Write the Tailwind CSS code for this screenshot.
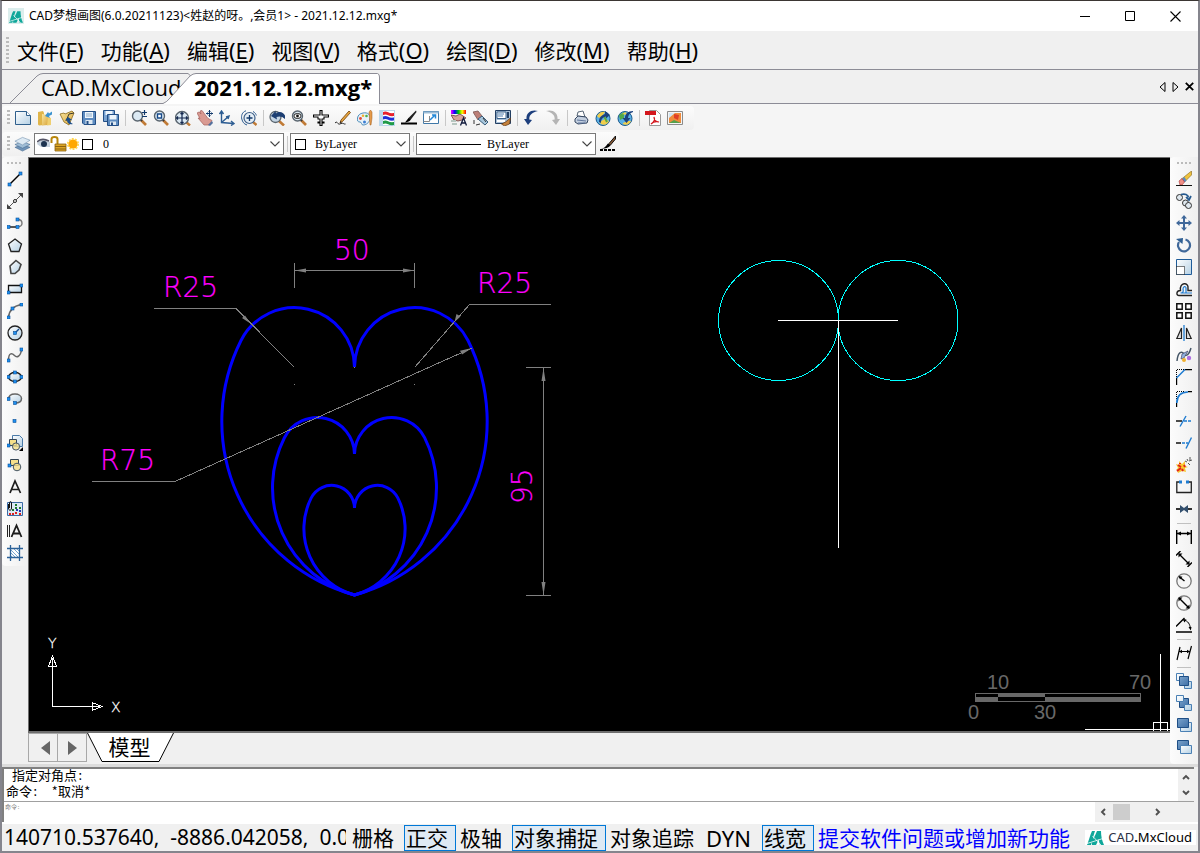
<!DOCTYPE html>
<html lang="zh-CN">
<head>
<meta charset="utf-8">
<title>CAD梦想画图</title>
<script src="https://cdn.jsdelivr.net/npm/@tailwindcss/browser@4"></script>
</head>
<body class="bg-[#f0f0f0] text-black">
<svg width="0" height="0" class="absolute" aria-hidden="true">
  <defs>
    <linearGradient id="gl" x1="0" y1="0" x2="1" y2="1"><stop offset="0" stop-color="#fff"/><stop offset="1" stop-color="#b4d0e4"/></linearGradient>
    <linearGradient id="gf" x1="0" y1="0" x2="1" y2="1"><stop offset="0" stop-color="#f9e6a0"/><stop offset="1" stop-color="#d9a53a"/></linearGradient>
    <linearGradient id="gd" x1="0" y1="0" x2="1" y2="1"><stop offset="0" stop-color="#7aa3cc"/><stop offset="1" stop-color="#3d6ea5"/></linearGradient>
    <linearGradient id="gr" x1="0" y1="0" x2="1" y2="0"><stop offset="0" stop-color="#f0f"/><stop offset=".25" stop-color="#00f"/><stop offset=".5" stop-color="#0c0"/><stop offset=".75" stop-color="#ff0"/><stop offset="1" stop-color="#f00"/></linearGradient>
    <g id="mag"><path d="M10 10l5 5" stroke="#c07a35" stroke-width="2.6"/><path d="M9.500 9.500l1.500 1.500" stroke="#333" stroke-width="2"/><circle cx="6.500" cy="6" r="5" fill="#dbe9f3" stroke="#59646e" stroke-width="1.400"/></g>
    <g id="magb"><path d="M11 12l4 3.500" stroke="#c07a35" stroke-width="2.400"/><circle cx="7" cy="8" r="6.500" fill="#dbe9f3" stroke="#59646e" stroke-width="1.400"/></g>
    <g id="pt"><rect x="-1.500" y="-1.500" width="3" height="3" fill="#1e90f0" stroke="#0a4f96" stroke-width=".6"/></g>
  </defs>
  <symbol id="new" viewBox="0 0 16 16"><path d="M.5 1.500h11l4 4v9h-15z" fill="url(#gl)" stroke="#2f5f8c"/><path d="M11.500 1.500v4h4" fill="#fff" stroke="#2f5f8c"/></symbol>
  <symbol id="open" viewBox="0 0 16 16"><path d="M1 2l5-1 1 2v12l-5 .5-1-1z" fill="#e0b54a"/><path d="M5 4l6 1v10l-6 .5z" fill="url(#gf)"/><path d="M11 7l3 1v7l-4 .5z" fill="#efcf70"/><path d="M8 6l3-4 1 1.500 3-2v3l-3 1.500 1 2z" fill="#3c93cf"/></symbol>
  <symbol id="openc" viewBox="0 0 16 16"><path d="M1 4l4-1 1 1 7-3 2 2-5 12-5-3z" fill="url(#gf)" stroke="#8a6a1c" stroke-width=".8"/><path d="M7 11l3-7 5-1" fill="none" stroke="#3b3b2c"/><path d="M14 14c-4 1-6-1-6-4l-2 .5L9 7l4 3-2 .3c0 2 1 3 3 3.700z" fill="#1d4f8b"/></symbol>
  <symbol id="save" viewBox="0 0 16 16"><path d="M1.500 1.500h13v13H3l-1.500-1.500z" fill="#5d8bc0" stroke="#234f86"/><path d="M4 2h8v6H4z" fill="#eef5fb"/><path d="M5 4h6M5 6h6" stroke="#89aac9"/><path d="M4.500 10h7v4h-7z" fill="#dde8f2"/><path d="M5.500 11h2v3h-2z" fill="#234f86"/></symbol>
  <symbol id="saveall" viewBox="0 0 16 16"><path d="M.5.500h11v11H.5z" fill="#7ba4d2" stroke="#234f86"/><path d="M2.500 1h7v4h-7z" fill="#eef5fb"/><path d="M4.500 4.500h11v11h-11z" fill="#5d8bc0" stroke="#234f86"/><path d="M6.500 5h7v4.500h-7z" fill="#eef5fb"/><path d="M7 11.500h6V15H7z" fill="#dde8f2"/><path d="M8 12.500h2V15H8z" fill="#234f86"/></symbol>
  <symbol id="zoompm" viewBox="0 0 16 16"><use href="#mag"/><path d="M13.500 0v5M11 2.500h5M11 6.500h5" stroke="#12396b" fill="none" stroke-width="1.200"/></symbol>
  <symbol id="zoomw" viewBox="0 0 16 16"><use href="#mag"/><path d="M4.500 4h4v4h-4z" fill="#fff" stroke="#174a8a" stroke-width="1.400"/></symbol>
  <symbol id="zoome" viewBox="0 0 16 16"><use href="#magb"/><path d="M7 2.500v11M1.500 8h11M5.500 4L7 2.500 8.500 4M5.500 12L7 13.500 8.500 12M3 6.500L1.500 8 3 9.500M11 6.500L12.500 8 11 9.500" stroke="#12264d" fill="none" stroke-width="1.200"/></symbol>
  <symbol id="pan" viewBox="0 0 16 16"><path d="M0 3l2-1 2 2-1-3 2-.5 3 4 3 4 4 2-3 4.500H7L1 8l2 .5z" fill="#d99a92" stroke="#a35f5a" stroke-width=".7"/><path d="M11 15l4-4 1 2-3 3z" fill="#54719e"/><path d="M12.500 0v7M9 3.500h7M11.500 1.500h2M11.500 5.500h2M10.500 2.500v2M14.500 2.500v2" stroke="#12396b" fill="none"/></symbol>
  <symbol id="ucs" viewBox="0 0 16 16"><path d="M2.500 1v11.500l12 1M2.500 12.500l7-6M.5 4l2-3 2 3M12 11l3 2.500-3 2M7 7l3-1-1 3" fill="none" stroke="#2c5c92" stroke-width="1.400"/></symbol>
  <symbol id="zoomr" viewBox="0 0 16 16"><path d="M12 12l3.500 3" stroke="#c07a35" stroke-width="2.400"/><circle cx="8.500" cy="8" r="5.500" fill="#e4eef6" stroke="#3d5f88" stroke-width="1.200"/><path d="M8.500 5v6M5.500 8h6" stroke="#12396b" stroke-width="1.300"/><path d="M5 .8C1 2 0 6 .8 9s2 5 5.200 6M12 1.500c2 1 3 2.500 3.300 4" fill="none" stroke="#2c5c92"/></symbol>
  <symbol id="zoomp" viewBox="0 0 16 16"><path d="M10 11l5 4.500" stroke="#c07a35" stroke-width="2.600"/><circle cx="6.500" cy="7" r="5.500" fill="#c4d5e4" stroke="#59646e" stroke-width="1.300"/><path d="M2 6l4.500-5 .5 2.500c4-3 7-1 9 2V9C13 6 10 6 7.500 7L8 9.500z" fill="#1d3f73"/></symbol>
  <symbol id="zoomv" viewBox="0 0 16 16"><use href="#mag"/><ellipse cx="6.500" cy="6" rx="3.600" ry="2.500" fill="#fff" stroke="#222"/><circle cx="6.500" cy="6" r="1.400" fill="#111"/></symbol>
  <symbol id="plane" viewBox="0 0 16 16"><path d="M7 .5h2V5h6.500v2H11v2H9v3h2v1H9v2.500H7V13H5v-1h2V9H5V7H.5V5H7z" fill="#fff" stroke="#000" stroke-width="1.100"/></symbol>
  <symbol id="pencil" viewBox="0 0 16 16"><path d="M14 1l1.500 1.500-8 9L5 13l1-3z" fill="#e8a73c" stroke="#7c4a16" stroke-width=".9"/><path d="M5 13l.6-2 1.200 1.200z" fill="#222"/><path d="M0 13c3-3 2 3 6 .5 2-1 3 1 4.500.5" fill="none" stroke="#222"/></symbol>
  <symbol id="palette" viewBox="0 0 16 16"><path d="M6 3c5-1 8 2 7 6-1 4-4 6-7 6-2 0-1-3-3-3s-3-1-2.500-4C1 5 3 3.500 6 3z" fill="#e8f1f8" stroke="#4f8fbc"/><circle cx="3.500" cy="8.500" r="1.400" fill="#e04b3a"/><circle cx="6" cy="5.700" r="1.300" fill="#f0b030"/><circle cx="9.500" cy="6" r="1.300" fill="#4bb04b"/><circle cx="7.500" cy="12" r="1.500" fill="#3b7fd4"/><path d="M12 2l1.500-2L15 2v6l-1 7h-1z" fill="#e59a4a" stroke="#9e5c1e" stroke-width=".5"/></symbol>
  <symbol id="ltype" viewBox="0 0 16 16"><path d="M0 0h16v16H0z" fill="#bcd8ec"/><path d="M4 1h11v14H4z" fill="#fff"/><path d="M4 2c4-2 5 2 11 1v3c-6 1-7-3-11-1z" fill="#e8202c"/><path d="M4 6.500c4-2 5 2 11 1v3c-6 1-7-3-11-1z" fill="#1f2fd8"/><path d="M4 11c4-2 5 2 11 1v3c-6 1-7-3-11-1z" fill="#1f9a48"/></symbol>
  <symbol id="lweight" viewBox="0 0 16 16"><path d="M15 .5l.5 1.500L9.500 10l-2.500.5.500-2.500z" fill="#222"/><path d="M7.500 8l2 2C8 12 6 12 4 12.500z" fill="#000"/><path d="M0 13.500h16" stroke="#000" stroke-width="2"/></symbol>
  <symbol id="scalewin" viewBox="0 0 16 16"><path d="M.5 1.500h15v12H.5z" fill="#fff" stroke="#3f78a8"/><path d="M.5 2.500h15" stroke="#9dbdd7" stroke-width="2"/><path d="M6.500 6v5.500H.5" fill="none" stroke="#888"/><path d="M7 10l5-5M9 5h3.500v3.500" fill="none" stroke="#2589d8" stroke-width="1.500"/></symbol>
  <symbol id="colorA" viewBox="0 0 16 16"><path d="M0 0h15v4H0z" fill="url(#gr)"/><path d="M0 5l5 1 4-2 6 4-4 2-4 1-4-1z" fill="#d7a198" stroke="#6b3b39" stroke-width=".8"/><path d="M0 10h5v2H0zM1 13h5v2H1z" fill="#b7c6c0"/><path d="M9.500 15.500L12.500 8l3 7.500M10.500 13h4" fill="none" stroke="#101a3c" stroke-width="1.300"/></symbol>
  <symbol id="brush" viewBox="0 0 16 16"><path d="M0 2l5-1 4 5-4 4z" fill="#bd8078" stroke="#7a5652" stroke-width=".8"/><path d="M5 9l4-3 6 6-3 3z" fill="#a7c6dc" stroke="#395d7b"/><path d="M1 10v4M3 15l4-1M10 8l3 4" stroke="#333"/></symbol>
  <symbol id="blockw" viewBox="0 0 16 16"><path d="M.5.500h15v13H.5z" fill="#a9bfd6" stroke="#223f63"/><path d="M2 2h9v6.500H2z" fill="#fff" stroke="#3b628c"/><path d="M3 4h6M3 6h5" stroke="#4f7fb0"/><path d="M12 2h2v6h-2z" fill="#223f63"/><path d="M2 10h8v2H2z" fill="#fff"/><path d="M15.500 8l-5 4-4 2 3 2 5-2z" fill="#c4803a" stroke="#5c3411" stroke-width=".7"/></symbol>
  <symbol id="undo" viewBox="0 0 16 16"><path d="M15 1C8-1 3 3 3.500 9L1 9l4 6 4-5-2.700-.5C6 5 9 2.500 15 1z" fill="#1d3f7d"/></symbol>
  <symbol id="redo" viewBox="0 0 16 16"><path d="M1 1c7-2 12 2 11.500 8H15l-4 6-4-5 2.700-.5C10 5 7 2.500 1 1z" fill="#b4b4b4"/></symbol>
  <symbol id="print" viewBox="0 0 16 16"><path d="M4 6l1-4 5-1 2 6z" fill="#fff" stroke="#456" stroke-width=".9"/><path d="M2 9l3-3 8 1 2 3-1 3-9 1-3-2z" fill="#c3cfdf" stroke="#33455f"/><path d="M4 10l9 1M5 13l7 0" stroke="#5e749a"/></symbol>
  <symbol id="web1" viewBox="0 0 16 16"><circle cx="8" cy="8.500" r="7" fill="#59b0e6" stroke="#1c5a8b"/><path d="M2 6c2-4 6-5 8-4L8 5l-4 3zM4 12l6-3 4 2c-1 3-5 5-8 3z" fill="#f1cd4a"/><path d="M9 6l3 6" stroke="#5aa844" stroke-width="2"/><path d="M4 12c0-5 3-7 6-8l0-3 5 4-4 3.500V6.500C8 7 6 9 6 13z" fill="#1c417e"/></symbol>
  <symbol id="web2" viewBox="0 0 16 16"><circle cx="8" cy="8.500" r="7" fill="#59b0e6" stroke="#1c5a8b"/><path d="M2 5l5-3v6l-4 2z" fill="#51a748"/><path d="M6 13l5-2 3 0c-1 3-5 5-8 3zM5 4l4-2 1 3z" fill="#f1cd4a"/><path d="M16 1c-5 0-8 3-8 7H5.500l4 5 4-5H11c0-3 2-5 5-6z" fill="#1c417e"/></symbol>
  <symbol id="pdf" viewBox="0 0 16 16"><path d="M4.500.500h7l4 4v11h-11z" fill="#fff" stroke="#999"/><path d="M0 1h11v4H0z" fill="#d3161d"/><path d="M6 14c3-2 4-5 3-7 0 4 2 5 5 5-3-1-6 0-8 2z" fill="none" stroke="#d3161d" stroke-width="1.200"/></symbol>
  <symbol id="img" viewBox="0 0 16 16"><path d="M.5 1.500h15v13H.5z" fill="#f4f4f4" stroke="#8b8b8b"/><path d="M2 3h12v10H2z" fill="#f08a3a"/><path d="M2 3h6l-6 5z" fill="#cfe6f5"/><path d="M2 13l5-3 7 3z" fill="#56a04a"/><path d="M7 4l5 1-1 5-4-2z" fill="#df3f27"/></symbol>
  <symbol id="layers" viewBox="0 0 18 16"><path d="M1 11.500l8-3 8 3-8 4z" fill="#6f93b8" stroke="#44688e" stroke-width=".6"/><path d="M1 8.500l8-3 8 3-8 4z" fill="#9fbdd6" stroke="#44688e" stroke-width=".6"/><path d="M1 5l8-4 8 3-8 5z" fill="#dce9f3" stroke="#6f8fae" stroke-width=".6"/></symbol>
  <symbol id="lwpen" viewBox="0 0 16 16"><path d="M15.500 0v3l-5 6-2 .5.500-2z" fill="#8a5a35" stroke="#111"/><path d="M1 12.500c4 0 5-3 7-5l2.500 2c-2 2.500-5 3-9.500 3z" fill="#000"/><path d="M0 14h16" stroke="#000" stroke-width="2" stroke-dasharray="3 1"/></symbol>
  <!-- draw toolbar -->
  <symbol id="line" viewBox="0 0 16 16"><path d="M2.500 13.500l11-11" stroke="#000" stroke-width="1.400"/><use href="#pt" x="2.500" y="13.500"/><use href="#pt" x="13.500" y="2.500"/></symbol>
  <symbol id="xline" viewBox="0 0 16 16"><path d="M2 14L14 2" stroke="#555"/><path d="M0 16v-5l5 5zM16 0v5l-5-5z" fill="#444"/><circle cx="8" cy="8" r="1.500" fill="#fff" stroke="#222"/></symbol>
  <symbol id="pline" viewBox="0 0 16 16"><path d="M1.500 12h9" stroke="#111" stroke-width="1.400"/><path d="M10.500 12c6 0 6-7.500 0-7.500" fill="none" stroke="#777" stroke-width="1.400"/><use href="#pt" x="1.500" y="12"/><use href="#pt" x="10.500" y="12"/><use href="#pt" x="10.500" y="4.500"/></symbol>
  <symbol id="polygon" viewBox="0 0 16 16"><path d="M8 2l6.500 5-2.500 7.500H4L1.500 7z" fill="url(#gl)" stroke="#222" stroke-width="1.300"/></symbol>
  <symbol id="polyirr" viewBox="0 0 16 16"><path d="M9 1.500l5 4-2 5.500-4 3.500H4L3 7z" fill="url(#gl)" stroke="#444" stroke-width="1.600"/></symbol>
  <symbol id="rect" viewBox="0 0 16 16"><path d="M1.500 4.500h13v7h-13z" fill="url(#gl)" stroke="#111" stroke-width="1.300"/><use href="#pt" x="1.500" y="11.500"/><use href="#pt" x="14.500" y="4.500"/></symbol>
  <symbol id="arc" viewBox="0 0 16 16"><path d="M1.500 14.500C2 7 6 3 14.500 1.500" fill="none" stroke="#666" stroke-width="1.500"/><use href="#pt" x="1.500" y="14.500"/><use href="#pt" x="5.500" y="5.500"/><use href="#pt" x="14.500" y="1.500"/></symbol>
  <symbol id="circle" viewBox="0 0 16 16"><circle cx="8" cy="8" r="7" fill="url(#gl)" stroke="#222" stroke-width="1.300"/><path d="M8 8l4-4" stroke="#174a8a" stroke-width="1.400"/><use href="#pt" x="8" y="8"/></symbol>
  <symbol id="spline" viewBox="0 0 16 16"><path d="M1.500 13.500c0-9 4-7 6-5s6 2 7-6" fill="none" stroke="#666" stroke-width="1.500"/><use href="#pt" x="1.500" y="13.500"/><use href="#pt" x="14.500" y="2.500"/></symbol>
  <symbol id="ellipse" viewBox="0 0 16 16"><ellipse cx="8" cy="8" rx="6.500" ry="4.500" fill="url(#gl)" stroke="#222" stroke-width="1.400"/><use href="#pt" x="1.500" y="8"/><use href="#pt" x="14.500" y="8"/><use href="#pt" x="8" y="3.500"/><use href="#pt" x="8" y="12.500"/></symbol>
  <symbol id="earc" viewBox="0 0 16 16"><path d="M1.500 8C2 1 14.500 2 14.500 7.500c0 3-3 4.500-6.500 4.500" fill="url(#gl)" stroke="#666" stroke-width="1.500"/><use href="#pt" x="1.500" y="8"/><use href="#pt" x="8" y="12"/></symbol>
  <symbol id="point" viewBox="0 0 16 16"><use href="#pt" x="7.500" y="8"/></symbol>
  <symbol id="block" viewBox="0 0 16 16"><path d="M5.500.500h7l3 3v8h-10z" fill="url(#gl)" stroke="#4a7aa8"/><path d="M2.500 4.500h7v6h-7z" fill="#f6e08a" stroke="#345"/><circle cx="9" cy="11.500" r="3.600" fill="#f6e08a" fill-opacity=".8" stroke="#456"/><use href="#pt" x="1.500" y="10.500"/><path d="M16 12v4h-4z" fill="#000"/></symbol>
  <symbol id="insert" viewBox="0 0 16 16"><path d="M3.500 2.500h8v6h-8z" fill="#f6e08a" stroke="#345"/><circle cx="10" cy="10" r="3.800" fill="#f6e08a" fill-opacity=".8" stroke="#456"/><use href="#pt" x="2.500" y="8.500"/></symbol>
  <symbol id="text" viewBox="0 0 16 16"><path d="M3 14L8 2l5.500 12M4.500 10.500h7" fill="none" stroke="#1c1c1c" stroke-width="1.700"/></symbol>
  <symbol id="hatch" viewBox="0 0 16 16"><path d="M.5 1.500h15v13H.5z" fill="#dce9f5" stroke="#3b6ba5"/><path d="M5 8h2v2H5zM8 3h2v2H8zM8 6h2v2H8zM12 6h2v2h-2z" fill="#1a7a2e"/><path d="M2 12h2v2H2zM5 12h2v2H5zM8 11h2v2H8zM12 12h2v2h-2z" fill="#e02020"/><path d="M12 9h2v2h-2zM9 8h2v2H9z" fill="#2438b0"/><path d="M1.500 3v4c0 3 3 3 3 0V2c0-2-2-2-2 0v5" fill="none" stroke="#111"/></symbol>
  <symbol id="mtext" viewBox="0 0 16 16"><path d="M.5 2v12M2.500 2v12" stroke="#222"/><path d="M4.500 14L9.500 2.500 14.500 14M6 10.500h7" fill="none" stroke="#1c1c1c" stroke-width="1.800"/></symbol>
  <symbol id="region" viewBox="0 0 16 16"><path d="M3 3.500h10v9H3z" fill="#fff"/><path d="M3 10l3 3M3 7l6 6M3 4l9 9M6 3l7 7M9 3l4 4" stroke="#7aa6cf"/><path d="M0 3.500h16M0 12.500h16M3.500 0v16M12.500 0v16" stroke="#2c6299" stroke-width="1.300"/></symbol>
  <!-- modify toolbar -->
  <symbol id="erase" viewBox="0 0 16 16"><path d="M15.500 0v4l-7 7-3-3z" fill="#f0c33c" stroke="#8a6414" stroke-width=".6"/><path d="M8.500 6l2 3.500-2 2-3-3.500z" fill="#5b8abf"/><path d="M3 10l3-2.500 2.500 3.500L6 14H4z" fill="#ef8f87" stroke="#a33" stroke-width=".6"/><path d="M0 14.500h16" stroke="#111"/></symbol>
  <symbol id="copy" viewBox="0 0 16 16"><circle cx="3.500" cy="4.500" r="3" fill="#dfe8ef" stroke="#333"/><circle cx="9.500" cy="10" r="3" fill="#dfe8ef" stroke="#333"/><circle cx="12.500" cy="12.500" r="3" fill="#dfe8ef" stroke="#333"/><path d="M5 1.500c4-1 7 0 7.500 3M10 4l3 3 2-4" fill="none" stroke="#24598f" stroke-width="1.700"/></symbol>
  <symbol id="move" viewBox="0 0 16 16"><path d="M8 0l3 3.500H9V7h3.500V5L16 8l-3.500 3V9H9v3.500h2L8 16l-3-3.500h2V9H3.500v2L0 8l3.500-3v2H7V3.500H5z" fill="#40689a"/></symbol>
  <symbol id="rotate" viewBox="0 0 16 16"><path d="M9.500 2.500A6 6 0 1 1 3 5" fill="none" stroke="#40689a" stroke-width="2.200"/><path d="M0 2l7-1-.5 6z" fill="#2f5f93"/></symbol>
  <symbol id="scale" viewBox="0 0 16 16"><path d="M.5.500h15v15H.5z" fill="url(#gl)" stroke="#1f5c99"/><path d="M.5 7.500h8v8h-8z" fill="#fff" stroke="#000" stroke-dasharray="1 1"/></symbol>
  <symbol id="offset" viewBox="0 0 16 16"><path d="M16 14.500H3c-3 0-3-5 1.500-5C3 1 13 1 12 7v2.500h4" fill="none" stroke="#222" stroke-width="1.400"/><path d="M16 12H4.500c3 0 3-2 2.500-4 0-3 3-3 3-1v5" fill="none" stroke="#1e7bd0" stroke-width="1.200"/></symbol>
  <symbol id="array" viewBox="0 0 16 16"><path d="M.8.800h5.400v5.400H.8zM9.800.800h5.400v5.400H9.800zM.8 9.800h5.400v5.400H.8zM9.800 9.800h5.400v5.400H9.800z" fill="#fff" stroke="#111" stroke-width="1.500"/></symbol>
  <symbol id="mirror" viewBox="0 0 16 16"><path d="M5.500 3v10.500H.8zM10.500 3v10.500h4.700z" fill="#e4e4e4" stroke="#222" stroke-width="1.200"/><path d="M8 0v16" stroke="#1e7bd0" stroke-width="1.300"/></symbol>
  <symbol id="match" viewBox="0 0 16 16"><path d="M1 14C2 4 6 4 8 7s5 1 7-6" fill="none" stroke="#456" stroke-width="1.400"/><path d="M6 7l6-3-4 7-3 1z" fill="#8fb0dc" stroke="#335" stroke-width=".6"/><circle cx="8" cy="13" r="2" fill="#f0b030"/><circle cx="13" cy="11" r="2.200" fill="#b06fe0"/></symbol>
  <symbol id="chamfer" viewBox="0 0 16 16"><path d="M.5 8V.5H8" fill="none" stroke="#000" stroke-dasharray="1 1"/><path d="M.5 16V9M9 .5h7" stroke="#000" stroke-width="1.400"/><path d="M.5 9L9 .5" stroke="#1e7bd0" stroke-width="1.500"/></symbol>
  <symbol id="fillet" viewBox="0 0 16 16"><path d="M.5 8V.5H8" fill="none" stroke="#000" stroke-dasharray="1 1"/><path d="M.5 16v-4M12 .5h4" stroke="#000" stroke-width="1.400"/><path d="M.8 12C1 5 5 1 12 1" fill="none" stroke="#1e7bd0" stroke-width="1.700"/></symbol>
  <symbol id="trim" viewBox="0 0 16 16"><path d="M0 8h6" stroke="#000" stroke-width="1.400"/><path d="M8 8h8" stroke="#1e7bd0" stroke-width="1.400" stroke-dasharray="3 1"/><path d="M4 13.500L10 3" stroke="#1e7bd0" stroke-width="1.400"/></symbol>
  <symbol id="extend" viewBox="0 0 16 16"><path d="M0 8h5" stroke="#000" stroke-width="1.400"/><path d="M6 8h6" stroke="#1e7bd0" stroke-width="1.400" stroke-dasharray="3 1"/><path d="M10 13.500L15.500 2.500" stroke="#1e7bd0" stroke-width="1.400"/></symbol>
  <symbol id="explode" viewBox="0 0 16 16"><path d="M0 7l3 1V4l3 3 3-3 0 5 3 1-3 1 1 4-4-1-4 2-1-3-1 0 2-2z" fill="#f8c832"/><path d="M1 14l4-3M2 8l3 2M7 14l-1-2M8 8l1 2M4 6v1" stroke="#e2231a" stroke-width="2"/><path d="M9 4l2 1M11 2l1 2M14 0v3M13 4l3-1M12 6l2 2" stroke="#555"/></symbol>
  <symbol id="break" viewBox="0 0 16 16"><path d="M4 3H.8v10.500h14.500V3H12" fill="none" stroke="#222" stroke-width="1.300"/><path d="M3 1.500h3v3H3zM10 1.500h3v3h-3z" fill="#1e7bd0"/></symbol>
  <symbol id="join" viewBox="0 0 16 16"><path d="M0 8h16" stroke="#000" stroke-width="1.600"/><path d="M4 4l4 3 4-3v8L8 9l-4 3z" fill="#34506e"/></symbol>
  <symbol id="dlin" viewBox="0 0 16 16"><path d="M.7 1v14M15.300 1v14M1 4.500h14" stroke="#000" stroke-width="1.400"/><path d="M1 4.500l4-2v4zM15 4.500l-4-2v4z"/></symbol>
  <symbol id="dali" viewBox="0 0 16 16"><path d="M4.500 0L0 4.500M16 11.500L11.500 16M3 3l10 10" stroke="#000" stroke-width="1.400"/><path d="M2.500 2.500h4l-4 4zM13.500 13.500h-4l4-4z"/></symbol>
  <symbol id="drad" viewBox="0 0 16 16"><circle cx="8" cy="8" r="7.200" fill="#f6f6f6" stroke="#777" stroke-width="1.300"/><path d="M3.500 4l5 4" stroke="#000" stroke-width="1.500"/><path d="M2.500 3l4 .8-2.500 2.700z"/></symbol>
  <symbol id="ddia" viewBox="0 0 16 16"><circle cx="8" cy="8" r="7.200" fill="#f6f6f6" stroke="#777" stroke-width="1.300"/><path d="M3 3l10 10" stroke="#000" stroke-width="1.400"/><path d="M2.500 2.500h4l-4 4zM13.500 13.500h-4l4-4z"/></symbol>
  <symbol id="dang" viewBox="0 0 16 16"><path d="M0 15h16M0 9.500L8.500 1" stroke="#000" stroke-width="1.400"/><path d="M8 3c4 1 6 4 6.500 9" fill="none" stroke="#000"/><path d="M6.500 2l4 .5-2 3zM14.800 13.500L12.500 10h3z"/></symbol>
  <symbol id="dedit" viewBox="0 0 16 16"><path d="M4 2L1 15M15.500 1L12 14M3.500 6.500h10" stroke="#000" stroke-width="1.200"/><path d="M3 6.500l3-1.700v3.400zM14 6.500l-3-1.700v3.400z"/></symbol>
  <symbol id="o1" viewBox="0 0 16 16"><path d="M.5.500h7v7h-7zM8.500 8.500h7v7h-7z" fill="url(#gl)" stroke="#4a80b4"/><path d="M3.500 3.500h9v9h-9z" fill="url(#gd)" stroke="#1f4f86"/></symbol>
  <symbol id="o2" viewBox="0 0 16 16"><path d="M3.500 3.500h9v9h-9z" fill="url(#gd)" stroke="#1f4f86"/><path d="M.5.500h7v6h-7zM8.500 9.500h7v6h-7z" fill="url(#gl)" stroke="#4a80b4"/></symbol>
  <symbol id="o3" viewBox="0 0 16 16"><path d="M4.500 5.500h11v9h-11z" fill="url(#gl)" stroke="#4a80b4"/><path d="M1.500 1.500h11v9h-11z" fill="url(#gd)" stroke="#1f4f86"/></symbol>
  <symbol id="o4" viewBox="0 0 16 16"><path d="M1.500 1.500h11v9h-11z" fill="url(#gd)" stroke="#1f4f86"/><path d="M4.500 6.500h11v8h-11z" fill="url(#gl)" stroke="#4a80b4"/></symbol>
  <symbol id="logo" viewBox="0 0 17 14"><path d="M0 14C2 9 3 4 5 0h3c-1 3-2 6-2 8C8 5 9 2 10 0h4c0 5 1 10 3 14h-4c-1-2-1-4-1-6l-3 6H5l0-3-1 3z" fill="#0fa79a"/><path d="M0 12.500l16-5M5.500 5L14 14" stroke="#fff" stroke-width=".8"/></symbol>
  <symbol id="chev" viewBox="0 0 10 6"><path d="M.5.500L5 5 9.500.500" fill="none" stroke="#444" stroke-width="1.100"/></symbol>
  <symbol id="chevb" viewBox="0 0 8 6"><path d="M1 1l3 3 3-3" fill="none" stroke="#505050" stroke-width="1.900"/></symbol>
</svg>

<div class="flex min-h-screen w-full flex-col border-t border-r-2 border-b-2 border-l-2 border-t-[#3b3633] border-r-[#85858d] border-b-[#85858d] border-l-[#85858d] font-['Noto_Sans','Noto_Sans_CJK_SC',sans-serif]">
  <!-- title bar -->
  <header class="flex h-[30px] items-center bg-white pl-1.5">
    <div class="flex size-4 items-end justify-center bg-[#dceeed] p-px"><svg class="h-3 w-3.5"><use href="#logo"/></svg></div>
    <h1 class="ml-[5px] flex-1 text-[12px] leading-5 whitespace-pre">CAD梦想画图(6.0.20211123)&lt;姓赵的呀。,会员1&gt; - 2021.12.12.mxg*</h1>
    <button aria-label="最小化" class="flex h-full w-[45px] items-center justify-center"><svg width="10" height="10"><path d="M0 5.500h10" stroke="#000"/></svg></button>
    <button aria-label="最大化" class="flex h-full w-[46px] items-center justify-center"><svg width="10" height="10"><path d="M.5.500h9v9h-9z" fill="none" stroke="#000"/></svg></button>
    <button aria-label="关闭" class="flex h-full w-[45px] items-center justify-center"><svg width="11" height="11"><path d="M.5.500l10 10M10.500.500l-10 10" stroke="#000" stroke-width="1.100"/></svg></button>
  </header>
  <!-- menu -->
  <nav class="flex h-[39px] items-center border-b border-[#8c8c96] pl-1">
    <div class="mr-2 h-[26px] w-[3px] bg-[repeating-linear-gradient(#bbb_0_2px,transparent_2px_4px)]"></div>
    <div id="menus" class="flex gap-[17px] text-[21px] leading-7"></div>
  </nav>
  <!-- document tabs -->
  <div class="flex h-[34px] items-end border-b border-[#8c8c96] pl-2">
    <button class="relative h-[30px] w-[184px] overflow-hidden pb-0.5 pl-[31px] text-left text-[22px] leading-7 whitespace-nowrap font-['Open_Sans','Noto_Sans',sans-serif]">
      <svg class="absolute inset-0 h-full w-full"><path d="M0 30L27 3Q30 .500 33 .500H178L184 6" fill="none" stroke="#8c8c96"/></svg>
      <span class="relative">CAD.MxCloud</span>
    </button>
    <button class="relative -mb-px -ml-[31px] h-[31px] w-[217px] pb-1 pl-[31px] text-left text-[22px] leading-7 font-bold whitespace-nowrap font-['Open_Sans','Noto_Sans',sans-serif]">
      <svg class="absolute inset-0 h-full w-full"><path d="M0 30.500Q4 29 7 25L27 3Q30 .500 33 .500H214.500Q216.500 1 216.500 4V31H0z" fill="#fff"/><path d="M0 30.500Q4 29 7 25L27 3Q30 .500 33 .500H214.500Q216.500 1 216.500 4V31" fill="none" stroke="#8c8c96"/></svg>
      <span class="relative">2021.12.12.mxg*</span>
    </button>
    <div class="flex-1"></div>
    <div class="flex items-center gap-1.5 self-center pr-1">
      <button aria-label="上一个"><svg width="7" height="10"><path d="M6 .5v9L1 5z" fill="none" stroke="#000"/></svg></button>
      <button aria-label="下一个"><svg width="7" height="10"><path d="M1 .5v9L6 5z" fill="none" stroke="#000"/></svg></button>
      <button aria-label="关闭文档"><svg width="9" height="9"><path d="M.8.800l7.400 7.400M8.200.800L.8 8.200" stroke="#000" stroke-width="1.800"/></svg></button>
    </div>
  </div>
  <!-- toolbars -->
  <div class="flex flex-col gap-0.5 bg-[#f5f5f5] pt-0.5 pb-px">
    <div class="flex h-6 items-center self-start rounded bg-linear-to-b from-[#fcfcfc] to-[#f0f0f0] pr-2 pl-[5px]">
      <div class="mr-0.5 h-4 w-[3px] bg-[repeating-linear-gradient(#bbb_0_2px,transparent_2px_4px)]"></div>
      <div id="std" class="flex items-center"></div>
    </div>
    <div class="flex h-6 items-center self-start rounded bg-linear-to-b from-[#fcfcfc] to-[#f0f0f0] pl-[5px]">
      <div class="mr-1 h-4 w-[3px] bg-[repeating-linear-gradient(#bbb_0_2px,transparent_2px_4px)]"></div>
      <button aria-label="图层" class="mr-[3px]"><svg class="h-4 w-[17px]"><use href="#layers"/></svg></button>
      <label class="relative flex h-[22px] w-[250px] items-center border border-[#7a7a7a] bg-white pl-0.5">
        <svg width="13" height="12"><path d="M0 6C3 0 10 1 13 4v5H4z" fill="#c5d1dd"/><path d="M0 4c4-4 8-3 12-1" fill="none" stroke="#556" stroke-width="1.500"/><circle cx="7" cy="6" r="3" fill="#1d3350"/></svg>
        <svg width="17" height="16"><path d="M1.500 7V3q0-2 3-2t3 2v7" fill="none" stroke="#b8860b" stroke-width="2"/><path d="M5 8h11v7H5z" fill="#dca524" stroke="#8a6210" stroke-width=".8"/><path d="M5 10.500h11M5 13h11" stroke="#8a6210"/></svg>
        <svg width="12" height="12"><circle cx="6" cy="6" r="5.300" fill="none" stroke="#ffd84a" stroke-width="1.500" stroke-dasharray="2 1.300"/><circle cx="6" cy="6" r="4.600" fill="#ffa800"/></svg>
        <span class="ml-[3px] size-[11px] border border-black"></span>
        <select aria-label="当前图层" class="flex-1 appearance-none self-stretch bg-transparent pl-2.5 text-[12px] font-['Liberation_Serif',serif] outline-none"><option>0</option></select>
        <svg class="pointer-events-none absolute right-[3px] h-1.5 w-2.5"><use href="#chev"/></svg>
      </label>
      <span class="mr-0.5 ml-[3px] h-4 w-px bg-[#c8c8c8]"></span>
      <label class="relative flex h-[22px] w-[120px] items-center border border-[#7a7a7a] bg-white pl-1">
        <span class="size-[11px] border border-black"></span>
        <select aria-label="颜色" class="flex-1 appearance-none self-stretch bg-transparent pl-[9px] text-[12px] font-['Liberation_Serif',serif] outline-none"><option>ByLayer</option></select>
        <svg class="pointer-events-none absolute right-[3px] h-1.5 w-2.5"><use href="#chev"/></svg>
      </label>
      <span class="mr-0.5 ml-[3px] h-4 w-px bg-[#c8c8c8]"></span>
      <label class="relative flex h-[22px] w-[180px] items-center border border-[#7a7a7a] bg-white pl-0.5">
        <span class="h-px w-[62px] bg-black"></span>
        <select aria-label="线型" class="flex-1 appearance-none self-stretch bg-transparent pl-1.5 text-[12px] font-['Liberation_Serif',serif] outline-none"><option>ByLayer</option></select>
        <svg class="pointer-events-none absolute right-[3px] h-1.5 w-2.5"><use href="#chev"/></svg>
      </label>
      <button aria-label="线宽设置" class="flex w-[23px] justify-center"><svg class="size-4"><use href="#lwpen"/></svg></button>
    </div>
  </div>
  <!-- work area -->
  <main class="flex flex-1">
    <aside class="w-[26px] pr-px">
      <div class="rounded bg-linear-to-r from-[#fcfcfc] to-[#f0f0f0] pt-[5px] pb-0.5">
        <div class="mx-auto mb-1 h-0.5 w-[15px] bg-[repeating-linear-gradient(90deg,#bbb_0_2px,transparent_2px_4px)]"></div>
        <div id="draw" class="flex flex-col items-center"></div>
      </div>
    </aside>
    <section class="flex flex-1 flex-col">
      <div class="relative flex-1 overflow-hidden border-t border-b-2 border-l border-[#6e6e6e] bg-black">
        <svg class="absolute inset-0 h-full w-full" fill="none">
          <g transform="translate(-29 -158)">
            <g stroke="#0000ff" stroke-width="3">
              <path d="M354.500 367A60 60 0 0 0 241 340.500A180 180 0 0 0 354.500 595A180 180 0 0 0 468 340.500A60 60 0 0 0 354.500 367"/>
              <path d="M354.500 454A37.100 37.100 0 0 0 284.400 437.700A111.200 111.200 0 0 0 354.500 595A111.200 111.200 0 0 0 424.600 437.700A37.100 37.100 0 0 0 354.500 454"/>
              <path d="M354.500 508A22.900 22.900 0 0 0 311.200 497.900A68.700 68.700 0 0 0 354.500 595A68.700 68.700 0 0 0 397.800 497.900A22.900 22.900 0 0 0 354.500 508"/>
            </g>
            <g stroke="#808080" shape-rendering="crispEdges">
              <path d="M294.500 263v25M414.500 263v25M295 270.500h120M154 308.500h82L294.500 367.500M551 304.500h-81.500L414.500 367.500M92 481.500h83L472 348M526 367.500h25M526 595.500h25M543.500 367v228M294 384.500h1M414 384.500h1M354 367.500h1"/>
            </g>
            <path d="M295 270.500l11-2v4zM414 270.500l-11-2v4zM543.500 368l-2 13h4zM543.500 595l-2-13h4zM250.500 323.500L242 318l3-2.500zM454.500 322l2-8 4 2.500zM472 348l-12 2.800 2 3.600z" fill="#808080"/>
            <g stroke="#00ffff" shape-rendering="crispEdges"><circle cx="778.500" cy="320.500" r="60"/><circle cx="898" cy="320.500" r="60"/></g>
            <path d="M778 320.500h120M838.500 320v228" stroke="#fff" shape-rendering="crispEdges"/>
            <g fill="#ff00ff" stroke="#ff00ff" stroke-width=".2" font-family="DejaVu Sans" font-weight="200" font-size="28">
              <text x="334" y="260">50</text><text x="163" y="297">R25</text><text x="477" y="293">R25</text><text x="100" y="470">R75</text>
              <text transform="translate(532 504) rotate(-90)">95</text>
            </g>
          </g>
        </svg>
        <svg class="absolute bottom-0 left-0" width="100" height="100" fill="none" stroke="#fff">
          <path d="M23.500 33v42.500H63M19.500 35.500L23.500 25l4 10.500zM23.500 27v8M63 71.500l10 4-10 4zM63 75.500h8" shape-rendering="crispEdges"/>
          <g fill="#fff" stroke="#fff" stroke-width=".3" font-family="DejaVu Sans" font-weight="200" font-size="14"><text x="19" y="17">Y</text><text x="82" y="81">X</text></g>
        </svg>
        <svg class="absolute right-0 bottom-0" width="205" height="80" shape-rendering="crispEdges">
          <g fill="#686868" font-family="Liberation Sans" font-size="20"><text x="22" y="38">10</text><text x="164" y="38">70</text><text x="3" y="68">0</text><text x="69" y="68">30</text></g>
          <path d="M10.500 42.500h165v8h-165z" fill="none" stroke="#686868"/><path d="M10 46h23v5H10zM33 42h47v4H33zM80 46h96v5H80z" fill="#686868"/>
          <path d="M120 78.500h85M195.500 3v77M188.500 80v-8.500h14V80" fill="none" stroke="#fff"/>
        </svg>
      </div>
      <div class="flex h-[31px] items-start">
        <button aria-label="上一页" class="flex h-[29px] w-[30px] items-center justify-center border border-[#a8a8a8] pl-1"><svg width="9" height="14"><path d="M9 0v14L0 7z" fill="#666"/></svg></button>
        <button aria-label="下一页" class="-ml-px flex h-[29px] w-[30px] items-center justify-center border border-[#a8a8a8]"><svg width="9" height="14"><path d="M0 0v14L9 7z" fill="#666"/></svg></button>
        <button class="relative h-[29px] w-[87px] pr-0.5 text-[21px] leading-[29px]">
          <svg class="absolute inset-0 h-full w-full"><path d="M.5 0L15 28.500H72L86.500 0z" fill="#fff"/><path d="M.5 0L15 28.500H72L86.500 0" fill="none" stroke="#000"/></svg>
          <span class="relative">模型</span>
        </button>
      </div>
    </section>
    <aside class="w-7 pr-px">
      <div class="h-full rounded bg-linear-to-r from-[#fcfcfc] to-[#f0f0f0] pt-[5px] pl-px">
        <div class="mx-auto mb-1 h-0.5 w-[15px] bg-[repeating-linear-gradient(90deg,#bbb_0_2px,transparent_2px_4px)]"></div>
        <div id="modify" class="flex flex-col items-center"></div>
      </div>
    </aside>
  </main>
  <!-- command window -->
  <section class="border-t-[3px] border-[#dcdcdc] pr-1">
    <div class="border-t-2 border-l-2 border-[#808080] text-[13px] leading-4 font-['Noto_Sans_Mono_CJK_SC','Noto_Sans_CJK_SC',sans-serif]">
      <div class="flex border-b border-[#a0a0a0] bg-white">
        <div class="flex-1 pb-0.5 pl-0.5 whitespace-pre"><p class="-mt-0.5 pl-1.5">指定对角点:</p><p>命令:  *取消*</p></div>
        <div class="flex w-4 flex-col items-center justify-between bg-[#f0f0f0] py-[5px]">
          <button aria-label="向上" class="rotate-180"><svg class="block h-1.5 w-2"><use href="#chevb"/></svg></button>
          <button aria-label="向下"><svg class="block h-1.5 w-2"><use href="#chevb"/></svg></button>
        </div>
      </div>
      <div class="flex h-5 items-stretch bg-white">
        <label for="cmd" class="pl-px text-[6px] leading-[9px] text-[#777]">命令:</label>
        <input id="cmd" class="flex-1 bg-transparent px-1 text-[12px] outline-none">
        <div class="flex w-[71px] items-center justify-between bg-[#f0f0f0] px-1">
          <button aria-label="向左" class="rotate-90"><svg class="block h-1.5 w-2"><use href="#chevb"/></svg></button>
          <div class="mr-[19px] h-4 w-[17px] bg-[#cdcdcd]"></div>
          <button aria-label="向右" class="-rotate-90"><svg class="block h-1.5 w-2"><use href="#chevb"/></svg></button>
        </div>
        <div class="w-7 bg-[#f0f0f0]"></div>
      </div>
    </div>
  </section>
  <!-- status bar -->
  <footer class="flex h-[29px] items-center border-t-2 border-white pl-0.5">
    <output class="w-[342px] flex-none overflow-hidden text-[21px] leading-[27px] whitespace-pre">140710.537640,  -8886.042058,  0.000000</output>
    <div id="status" class="ml-1 flex flex-none gap-0.5 text-[21px] leading-6"></div>
    <a href="#" class="ml-1 flex-none text-[21px] leading-6 whitespace-nowrap text-[#0000ff]">提交软件问题或增加新功能</a>
    <div class="mr-0.5 ml-auto flex items-center gap-1 bg-white pr-1 pl-0.5">
      <svg class="h-3.5 w-[17px]"><use href="#logo"/></svg>
      <span class="text-[13px] leading-[15px] text-[#2b3044]">CAD<b class="text-black">.</b><span class="text-black">MxCloud</span></span>
    </div>
  </footer>
</div>
<script>
  const icon = (id, label) => `<button aria-label="${label}" class="flex size-[22px] flex-none items-center justify-center"><svg class="size-4"><use href="#${id}"/></svg></button>`;
  const fill = (el, list, sep) => {
    document.getElementById(el).innerHTML = list.split(' ').map(k => k === '|' ? sep : icon(...k.split(':'))).join('');
  };
  fill('std', 'new:新建 open:打开 openc:打开云图 save:保存 saveall:另存为 | zoompm:缩放 zoomw:窗口缩放 zoome:范围缩放 pan:平移 ucs:坐标系 zoomr:实时缩放 | zoomp:上一视图 zoomv:查看 plane:航拍 pencil:绘制 palette:颜色 ltype:线型 lweight:线宽 scalewin:比例 | colorA:文字颜色 brush:格式刷 blockw:块编辑 | undo:撤销 redo:重做 | print:打印 web1:上传 web2:下载 | pdf:PDF img:图片',
    '<span class="flex w-1.5 justify-center"><span class="h-4 w-px bg-[#c8c8c8]"></span></span>');
  fill('draw', 'line:直线 xline:构造线 pline:多段线 polygon:正多边形 polyirr:多边形 rect:矩形 arc:圆弧 circle:圆 spline:样条曲线 ellipse:椭圆 earc:椭圆弧 point:点 block:创建块 insert:插入块 text:文字 hatch:填充 mtext:多行文字 region:面域', '');
  fill('modify', 'erase:删除 copy:复制 move:移动 rotate:旋转 scale:缩放 offset:偏移 array:阵列 mirror:镜像 match:匹配 chamfer:倒角 fillet:圆角 trim:修剪 extend:延伸 explode:分解 break:打断 join:合并 | dlin:线性标注 dali:对齐标注 drad:半径标注 ddia:直径标注 dang:角度标注 | dedit:编辑标注 | o1:前置 o2:后置 o3:上移 o4:下移',
    '<span class="flex h-1.5 items-center"><span class="h-px w-3.5 bg-[#c0c0c0]"></span></span>');
  document.getElementById('menus').innerHTML = ['文件F', '功能A', '编辑E', '视图V', '格式O', '绘图D', '修改M', '帮助H']
    .map(m => `<button class="whitespace-nowrap">${m.slice(0, 2)}<span class="text-[22px]">(<u class="underline-offset-2">${m[2]}</u>)</span></button>`).join('');
  document.getElementById('status').innerHTML = [['栅格', 0], ['正交', 1], ['极轴', 0], ['对象捕捉', 1], ['对象追踪', 0], ['DYN', 0], ['线宽', 1]]
    .map(([t, on]) => `<button aria-pressed="${!!on}" class="border pr-[7px] pl-px whitespace-nowrap ${on ? 'border-[#0078d7] bg-[#dfeaf4]' : 'border-transparent'} ${t === 'DYN' ? 'w-14 text-left text-[22px]' : ''}">${t}</button>`).join('');
</script>
</body>
</html>
